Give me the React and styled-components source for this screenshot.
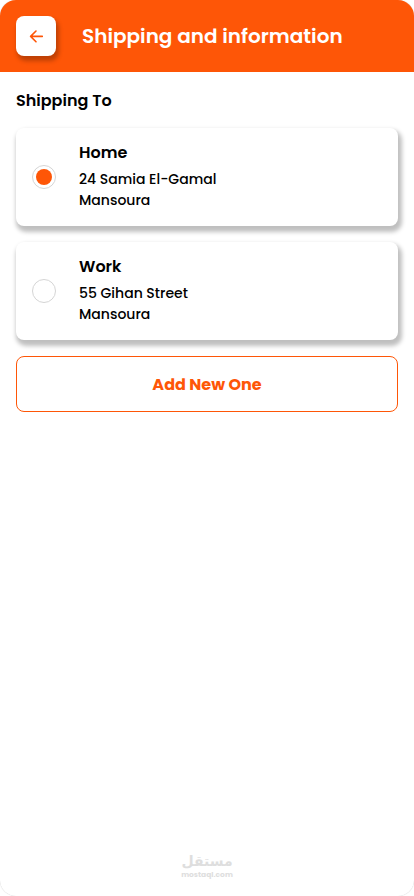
import React, { useState } from 'react';
import styled, { createGlobalStyle } from 'styled-components';

const addresses = [
    { id: 'home', name: 'Home', street: '24 Samia El-Gamal', city: 'Mansoura' },
    { id: 'work', name: 'Work', street: '55 Gihan Street', city: 'Mansoura' },
];

export default function App() {
    const [selected, setSelected] = useState('home');

    return (
        <>
            <GlobalStyle />
            <Screen>
                <Header>
                    <BackButton aria-label="Back">
                        <svg width="16" height="16" viewBox="0 0 16 16" fill="none" stroke="#fe5607" strokeWidth="1.6" strokeLinecap="round" strokeLinejoin="round">
                            <path d="M14.3 8.4H2.6M8 3L2.6 8.4L8 13.8" />
                        </svg>
                    </BackButton>
                    <Title>Shipping and information</Title>
                </Header>
                <Content>
                    <SectionTitle>Shipping To</SectionTitle>
                    <AddressList>
                        {addresses.map((address) => (
                            <AddressCard key={address.id} onClick={() => setSelected(address.id)}>
                                <Radio role="radio" aria-checked={selected === address.id}>
                                    {selected === address.id && <RadioDot />}
                                </Radio>
                                <AddressText>
                                    <AddressName>{address.name}</AddressName>
                                    <AddressLine>{address.street}</AddressLine>
                                    <AddressLine>{address.city}</AddressLine>
                                </AddressText>
                            </AddressCard>
                        ))}
                    </AddressList>
                    <AddButton>Add New One</AddButton>
                </Content>
                <Brand>
                    <BrandName lang="ar" dir="rtl">مستقل</BrandName>
                    <BrandUrl>mostaql.com</BrandUrl>
                </Brand>
            </Screen>
        </>
    );
}

const GlobalStyle = createGlobalStyle`
    * {
        box-sizing: border-box;
    }
    body {
        margin: 0;
        background: #fff;
        font-family: Poppins, Inter, sans-serif;
    }
`;

const Screen = styled.main`
    display: flex;
    flex-direction: column;
    height: 896px;
    overflow: hidden;
    border-radius: 16px;
    background: #fff;
    box-shadow: 0 0 1px rgba(0, 0, 0, 0.25);
`;

const Header = styled.header`
    display: flex;
    align-items: center;
    gap: 26px;
    height: 72px;
    padding: 0 16px;
    background: #fe5607;
`;

const BackButton = styled.button`
    display: flex;
    align-items: center;
    justify-content: center;
    width: 40px;
    height: 40px;
    padding: 0;
    border: none;
    border-radius: 8px;
    background: #fff;
    box-shadow: 2px 4px 4px 1px rgba(0, 0, 0, 0.25);
`;

const Title = styled.h1`
    margin: 0;
    color: #fff;
    font-size: 20px;
    font-weight: 600;
    line-height: 30px;
    white-space: nowrap;
`;

const Content = styled.section`
    display: flex;
    flex-direction: column;
    padding: 17px 16px 16px;
`;

const SectionTitle = styled.h2`
    margin: 0 0 15px;
    color: #000;
    font-size: 16px;
    font-weight: 600;
    line-height: 24px;
`;

const AddressList = styled.div`
    display: flex;
    flex-direction: column;
    gap: 16px;
    margin-bottom: 16px;
`;

const AddressCard = styled.div`
    display: flex;
    align-items: center;
    gap: 23px;
    height: 98px;
    padding: 0 16px;
    border-radius: 8px;
    background: #fff;
    box-shadow: 2px 4px 4px 2px rgba(0, 0, 0, 0.25);
`;

const Radio = styled.div`
    display: flex;
    align-items: center;
    justify-content: center;
    width: 24px;
    height: 24px;
    border: 1px solid #d5d5d5;
    border-radius: 50%;
`;

const RadioDot = styled.span`
    width: 16px;
    height: 16px;
    border-radius: 50%;
    background: #fe5607;
`;

const AddressText = styled.div`
    display: flex;
    flex-direction: column;
    padding-bottom: 2px;
    color: #000;
`;

const AddressName = styled.h3`
    margin: 0 0 4px;
    font-size: 16px;
    font-weight: 600;
    line-height: 24px;
`;

const AddressLine = styled.p`
    margin: 0;
    font-size: 14px;
    font-weight: 500;
    line-height: 21px;
`;

const AddButton = styled.button`
    height: 56px;
    border: 1px solid #fe5607;
    border-radius: 8px;
    background: #fff;
    color: #fe5607;
    font-family: inherit;
    font-size: 16px;
    font-weight: 700;
`;

const Brand = styled.footer`
    display: flex;
    flex-direction: column;
    align-items: center;
    margin: auto 0 17px;
    color: #dedede;
`;

const BrandName = styled.span`
    font-family: "DejaVu Sans", sans-serif;
    font-size: 14px;
    font-weight: 700;
    line-height: 17px;
`;

const BrandUrl = styled.span`
    font-size: 7.5px;
    font-weight: 700;
    line-height: 9px;
`;
